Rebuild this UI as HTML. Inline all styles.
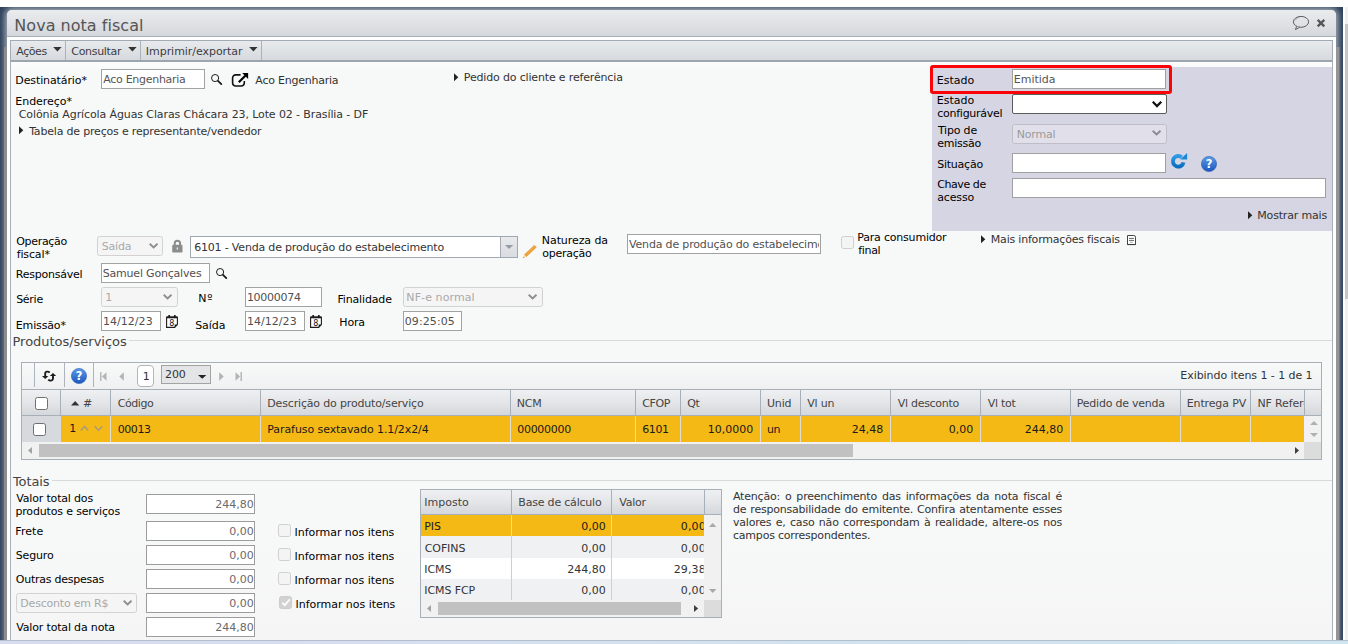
<!DOCTYPE html>
<html lang="pt-BR">
<head>
<meta charset="utf-8">
<title>Nova nota fiscal</title>
<style>
html,body{margin:0;padding:0;background:#fff;}
body{width:1348px;height:644px;overflow:hidden;font:11px/13px "DejaVu Sans","Liberation Sans",sans-serif;color:#333;}
#root{position:relative;width:1348px;height:644px;overflow:hidden;}
#root div,#root svg{position:absolute;box-sizing:border-box;}
.t{white-space:pre;line-height:13px;font-size:11px;}
.inp{background:#fff;border:1px solid #a2a2a2;}
.sel{background:#f5f5f5;border:1px solid #d2d2d2;border-radius:2.500px;}
.cb{background:#f4f4f4;border:1px solid #cfcfcf;border-radius:2.500px;}
.hd{background:linear-gradient(#eff0f2,#e2e4e7 55%,#d4d7db);}
.vl{background:#a7afb8;width:1px;}
.cl{background:#f3d785;width:1px;}

</style>
</head>
<body>
<div id="root">
<div style="left:0;top:7px;width:1343px;height:633px;background:#2e415a;overflow:hidden;"><div style="left:7px;top:3px;width:1329px;height:640px;border-radius:5px;box-shadow:0 0 6px 2px rgba(186,193,202,0.900);"></div><div style="left:4px;top:40px;width:3px;height:593px;background:#8c8c8c;"></div><div style="left:1336px;top:40px;width:3.500px;height:593px;background:#949494;border-right:1px solid #7a7a7a;"></div></div>
<div style="left:1343px;top:0px;width:5px;height:644px;background:#fff;"></div>
<div style="left:1345px;top:7px;width:3px;height:633px;background:#f1f1f1;"></div>
<div style="left:1345px;top:24px;width:3px;height:275px;background:#c6c6c6;"></div>
<div style="left:7px;top:10px;width:1329px;height:634px;background:#fff;border-radius:5px 5px 0 0;"></div>
<div style="left:7px;top:10px;width:1329px;height:27px;background:linear-gradient(#eaebed,#dfe1e4 55%,#d4d7db);border-radius:5px 5px 0 0;border-bottom:1px solid #a9b0b8;"></div>
<div class="t" style="top:17px;line-height:18px;font-size:16px;color:#555;letter-spacing:0.027px;left:14.33px;">Nova nota fiscal</div>
<div style="left:10px;top:40px;width:1323px;height:22px;background:linear-gradient(#e8eaec,#dfe2e5 50%,#d6d9dd);border:1px solid #a2abb4;border-bottom:2px solid #9ca6af;"></div>
<div style="left:65px;top:41px;width:1px;height:19px;background:#a9b1b9;"></div>
<div style="left:140px;top:41px;width:1px;height:19px;background:#a9b1b9;"></div>
<div style="left:261px;top:41px;width:1px;height:19px;background:#a9b1b9;"></div>
<div class="t" style="top:45px;color:#3c3c44;letter-spacing:-0.447px;left:16.31px;">Ações</div>
<div class="t" style="top:45px;color:#3c3c44;letter-spacing:-0.300px;left:71.28px;">Consultar</div>
<div class="t" style="top:45px;color:#3c3c44;letter-spacing:-0.040px;left:145.82px;">Imprimir/exportar</div>
<svg style="left:52.5px;top:47.300px" width="9" height="5" viewBox="0 0 9 5"><path d="M0.200 0h8.400l-4.200 4.400z" fill="#333"/></svg>
<svg style="left:128px;top:47.300px" width="9" height="5" viewBox="0 0 9 5"><path d="M0.200 0h8.400l-4.200 4.400z" fill="#333"/></svg>
<svg style="left:249px;top:47.300px" width="9" height="5" viewBox="0 0 9 5"><path d="M0.200 0h8.400l-4.200 4.400z" fill="#333"/></svg>
<div style="left:10px;top:62px;width:1323px;height:578px;background:linear-gradient(#fdfdfd,#f7f9f8 8px,#f7f9f8 470px,#f5f5f5 570px);border-left:1px solid #a9b1b9;border-right:1px solid #a9b1b9;"></div>
<div style="left:0px;top:640px;width:1348px;height:4px;background:linear-gradient(90deg,#d9dbee,#d3e2ef 60%,#cfe7f0);border-top:1px solid #b3bfcd;"></div>
<svg style="left:1292px;top:15px" width="19" height="17" viewBox="0 0 19 17"><ellipse cx="9" cy="6.850" rx="7.600" ry="5.450" fill="none" stroke="#5e5e5e" stroke-width="1"/><path d="M4.600 11.200L3.500 14.600L7.600 12.200" fill="#dfe1e4" stroke="#5e5e5e" stroke-width="1" stroke-linejoin="round"/><path d="M2.900 5.600C3.700 3.900 5.500 2.900 7.600 2.600" fill="none" stroke="#8a8a8a" stroke-width="0.700" stroke-dasharray="1.200 0.600"/></svg>
<svg style="left:1316px;top:18px" width="10" height="10" viewBox="0 0 10 10"><path d="M1.700 1.900l6.600 6.400M8.300 1.900l-6.600 6.400" stroke="#555" stroke-width="2.300" stroke-linecap="butt"/></svg>
<div class="t" style="top:74px;color:#000;letter-spacing:-0.110px;left:15.32px;">Destinatário*</div>
<div class="inp" style="left:101px;top:69px;width:104px;height:20px;"></div>
<div class="t" style="top:72.5px;color:#555;letter-spacing:-0.284px;left:103.21px;">Aco Engenharia</div>
<svg style="left:211px;top:73.9px" width="13" height="12" viewBox="0 0 13 12"><circle cx="4.100" cy="4.050" r="3.550" fill="none" stroke="#1a1a1a" stroke-width="1"/><path d="M7 6.900l3.300 3.200" stroke="#1a1a1a" stroke-width="1.800" stroke-linecap="round"/></svg>
<svg style="left:231px;top:72px" width="19" height="16" viewBox="0 0 19 16"><path d="M9.600 2.900H4.600a3 3 0 0 0-3 3V11a3 3 0 0 0 3 3h5.700a3 3 0 0 0 3-3V9.100" fill="none" stroke="#111" stroke-width="1.600"/><path d="M7.800 10.200L15 3" stroke="#000" stroke-width="2.200"/><path d="M11.200 1.100h5.900v6z" fill="#000"/></svg>
<div class="t" style="top:74px;color:#333;letter-spacing:-0.230px;left:255.31px;">Aco Engenharia</div>
<div class="t" style="top:95px;color:#000;letter-spacing:-0.049px;left:15.32px;">Endereço*</div>
<div class="t" style="top:107.5px;color:#333;letter-spacing:-0.108px;left:18.78px;">Colônia Agrícola Águas Claras Chácara 23, Lote 02 - Brasília - DF</div>
<svg style="left:19px;top:126px" width="5" height="9" viewBox="0 0 5 9"><path d="M0 0.300l4.300 4L0 8.300z" fill="#222"/></svg>
<div class="t" style="top:124.5px;color:#333;letter-spacing:-0.184px;left:29.13px;">Tabela de preços e representante/vendedor</div>
<svg style="left:454px;top:72.5px" width="5" height="9" viewBox="0 0 5 9"><path d="M0 0.300l4.300 4L0 8.300z" fill="#222"/></svg>
<div class="t" style="top:71px;color:#333;letter-spacing:-0.162px;left:463.82px;">Pedido do cliente e referência</div>
<div style="left:932px;top:67px;width:400px;height:164px;background:#d6d5e3;"></div>
<div class="t" style="top:74px;color:#000;letter-spacing:-0.014px;left:936.82px;">Estado</div>
<div class="inp" style="left:1012px;top:69px;width:154px;height:20px;border-color:#a0a0a0;"></div>
<div class="t" style="top:72.5px;color:#555;letter-spacing:-0.008px;left:1013.82px;">Emitida</div>
<div class="t" style="top:94px;color:#000;letter-spacing:-0.014px;left:936.82px;">Estado</div>
<div class="t" style="top:106.5px;color:#000;letter-spacing:-0.263px;left:937.29px;">configurável</div>
<div style="left:1012px;top:94px;width:155px;height:20px;background:#fff;border:1px solid #5c5c5c;border-radius:2px;"></div>
<svg style="left:1151.5px;top:101px" width="11" height="7.5" viewBox="0 0 11 7.5"><path d="M0.700 0.700L5.0 5.1L9.3 0.700" fill="none" stroke="#111" stroke-width="2.2" stroke-linecap="butt" stroke-linejoin="miter"/></svg>
<div style="left:930px;top:65px;width:242px;height:29px;border:3px solid #fa0409;border-radius:3px;"></div>
<div class="t" style="top:123.5px;color:#000;letter-spacing:-0.192px;left:937.93px;">Tipo de</div>
<div class="t" style="top:137px;color:#000;letter-spacing:-0.263px;left:937.29px;">emissão</div>
<div class="sel" style="left:1012px;top:124px;width:155px;height:20px;background:#e1e0ea;border-color:#bfbec8;"></div>
<div class="t" style="top:127.5px;color:#9a9a9a;letter-spacing:-0.200px;left:1016.82px;">Normal</div>
<svg style="left:1151.5px;top:130.4px" width="10.2" height="6.8" viewBox="0 0 10.2 6.8"><path d="M0.700 0.700L4.6 4.4L8.5 0.700" fill="none" stroke="#8a8a92" stroke-width="1.9" stroke-linecap="butt" stroke-linejoin="miter"/></svg>
<div class="t" style="top:157.5px;color:#000;letter-spacing:-0.224px;left:937.17px;">Situação</div>
<div class="inp" style="left:1012px;top:153px;width:154px;height:20px;border-color:#a0a0a0;"></div>
<svg style="left:1170px;top:152px" width="18" height="18" viewBox="0 0 18 18"><defs><linearGradient id="rg" x1="0" y1="0" x2="0" y2="1"><stop offset="0" stop-color="#2f9be6"/><stop offset="1" stop-color="#0a6fc0"/></linearGradient></defs><path d="M13.500 10.300A5.350 5.350 0 1 1 11.700 5.200" fill="none" stroke="url(#rg)" stroke-width="3.900"/><path d="M10.300 7.500L17.100 0.900v6.600z" fill="#1787d8"/></svg>
<svg style="left:1201px;top:156px" width="16" height="16" viewBox="0 0 16 16"><defs><linearGradient id="hg1201" x1="0" y1="0" x2="0" y2="1"><stop offset="0" stop-color="#5a9be8"/><stop offset="1" stop-color="#1c57c0"/></linearGradient></defs><circle cx="8" cy="8" r="7.600" fill="url(#hg1201)" stroke="#2a5db0" stroke-width="0.600"/><text x="8" y="12.300" font-size="11.500" font-weight="bold" text-anchor="middle" fill="#fff" font-family="DejaVu Sans, Liberation Sans, sans-serif">?</text></svg>
<div class="t" style="top:178px;color:#000;letter-spacing:-0.431px;left:937.28px;">Chave de</div>
<div class="t" style="top:190.5px;color:#000;letter-spacing:-0.158px;left:937.24px;">acesso</div>
<div class="inp" style="left:1012px;top:178px;width:314px;height:20px;border-color:#a0a0a0;"></div>
<svg style="left:1248px;top:210.5px" width="5" height="9" viewBox="0 0 5 9"><path d="M0 0.300l4.300 4L0 8.300z" fill="#222"/></svg>
<div class="t" style="top:208.5px;color:#333;letter-spacing:-0.180px;left:1257.32px;">Mostrar mais</div>
<div class="t" style="top:234.5px;color:#000;letter-spacing:-0.326px;left:16.28px;">Operação</div>
<div class="t" style="top:247.5px;color:#000;letter-spacing:-0.123px;left:16.65px;">fiscal*</div>
<div class="sel" style="left:97px;top:236px;width:66px;height:20px;"></div>
<div class="t" style="top:240px;color:#a9a9a9;letter-spacing:-0.148px;left:101.67px;">Saída</div>
<svg style="left:149px;top:243.4px" width="10.2" height="6.8" viewBox="0 0 10.2 6.8"><path d="M0.700 0.700L4.6 4.4L8.5 0.700" fill="none" stroke="#8e8e8e" stroke-width="1.9" stroke-linecap="butt" stroke-linejoin="miter"/></svg>
<svg style="left:171px;top:239px" width="13" height="15" viewBox="0 0 13 15"><path d="M3.700 6.500V4.400a2.700 2.700 0 0 1 5.400 0v2.100" fill="none" stroke="#8c8c8c" stroke-width="2"/><rect x="1.200" y="5.700" width="10.300" height="7.900" rx="1.200" fill="#8c8c8c"/><path d="M6.300 8.600v2" stroke="#f7f8f8" stroke-width="1.200"/></svg>
<div style="left:190px;top:236px;width:328px;height:22px;background:#fff;border:1px solid #a0a8b1;"></div>
<div style="left:500px;top:237px;width:17px;height:20px;background:linear-gradient(#e8eaec,#d9dce0);border-left:1px solid #a4acb5;"></div>
<svg style="left:504.800px;top:245px" width="9" height="4" viewBox="0 0 9 4"><path d="M0 0h8.200L4.100 3.900z" fill="#959ca4"/></svg>
<div class="t" style="top:240.5px;color:#333;letter-spacing:-0.182px;left:194.13px;">6101 - Venda de produção do estabelecimento</div>
<svg style="left:522px;top:244px" width="15" height="15" viewBox="0 0 15 15"><path d="M12.300 1.400l1.900 1.900L4.300 12.700 2.400 10.800z" fill="#f2a33a" stroke="#e0902a" stroke-width="0.700"/><path d="M2.400 10.800l1.900 1.900-3.300 1.100z" fill="#f3ddb0"/><path d="M1.700 12.700l0.600 0.600-1.400 0.500z" fill="#222"/></svg>
<div class="t" style="top:233.5px;color:#000;letter-spacing:-0.077px;left:541.82px;">Natureza da</div>
<div class="t" style="top:246.5px;color:#000;letter-spacing:-0.265px;left:542.29px;">operação</div>
<div class="inp" style="left:627px;top:234px;width:194px;height:20px;"></div>
<div class="t" style="left:629px;top:238px;width:190px;overflow:hidden;color:#505050;letter-spacing:-0.170px;">Venda de produção do estabelecimento</div>
<div class="cb" style="left:841px;top:236px;width:13px;height:13px;"></div>
<div class="t" style="top:231px;color:#000;letter-spacing:-0.202px;left:857.32px;">Para consumidor</div>
<div class="t" style="top:244px;color:#000;letter-spacing:-0.305px;left:858.15px;">final</div>
<svg style="left:981px;top:234.5px" width="5" height="9" viewBox="0 0 5 9"><path d="M0 0.300l4.300 4L0 8.300z" fill="#222"/></svg>
<div class="t" style="top:233px;color:#333;letter-spacing:-0.202px;left:990.82px;">Mais informações fiscais</div>
<svg style="left:1127px;top:235px" width="10" height="11" viewBox="0 0 10 11"><path d="M0.500 0.500H6.800a1.700 1.700 0 0 1 1.700 1.700V9.500H0.500z" fill="#fff" stroke="#444" stroke-width="1"/><path d="M2 3.400h5M2 5.400h5" stroke="#555" stroke-width="0.900"/><path d="M2.800 7.300h3" stroke="#999" stroke-width="0.800"/><path d="M0.300 9.600h8.400" stroke="#333" stroke-width="0.800"/></svg>
<div class="t" style="top:267.5px;color:#000;letter-spacing:-0.233px;left:15.82px;">Responsável</div>
<div class="inp" style="left:101px;top:263px;width:109px;height:20px;"></div>
<div class="t" style="top:266.5px;color:#505050;letter-spacing:-0.190px;left:102.67px;">Samuel Gonçalves</div>
<svg style="left:216px;top:268px" width="13" height="12" viewBox="0 0 13 12"><circle cx="4.100" cy="4.050" r="3.550" fill="none" stroke="#1a1a1a" stroke-width="1"/><path d="M7 6.900l3.300 3.200" stroke="#1a1a1a" stroke-width="1.800" stroke-linecap="round"/></svg>
<div class="t" style="top:292.5px;color:#000;letter-spacing:-0.275px;left:16.17px;">Série</div>
<div class="sel" style="left:101px;top:287px;width:77px;height:20px;"></div>
<div class="t" style="top:291px;color:#a9a9a9;letter-spacing:-0.105px;left:105.19px;">1</div>
<svg style="left:163.4px;top:294.4px" width="10.2" height="6.8" viewBox="0 0 10.2 6.8"><path d="M0.700 0.700L4.6 4.4L8.5 0.700" fill="none" stroke="#8e8e8e" stroke-width="1.9" stroke-linecap="butt" stroke-linejoin="miter"/></svg>
<div class="t" style="top:292px;color:#000;letter-spacing:0.779px;left:198.22px;">Nº</div>
<div class="inp" style="left:245px;top:287px;width:77px;height:20px;"></div>
<div class="t" style="top:291px;color:#505050;letter-spacing:-0.282px;left:246.89px;">10000074</div>
<div class="t" style="top:293px;color:#000;letter-spacing:-0.147px;left:337.42px;">Finalidade</div>
<div class="sel" style="left:403px;top:287px;width:140px;height:20px;"></div>
<div class="t" style="top:291px;color:#a9a9a9;letter-spacing:0.097px;left:406.32px;">NF-e normal</div>
<svg style="left:528px;top:294.4px" width="10.2" height="6.8" viewBox="0 0 10.2 6.8"><path d="M0.700 0.700L4.6 4.4L8.5 0.700" fill="none" stroke="#8e8e8e" stroke-width="1.9" stroke-linecap="butt" stroke-linejoin="miter"/></svg>
<div class="t" style="top:318.5px;color:#000;letter-spacing:-0.150px;left:15.82px;">Emissão*</div>
<div class="inp" style="left:101px;top:311px;width:60px;height:20px;"></div>
<div class="t" style="top:315px;color:#505050;letter-spacing:0.055px;left:102.89px;">14/12/23</div>
<svg style="left:166.4px;top:315px" width="12" height="13" viewBox="0 0 12 13"><path d="M0.600 2.400H11.400V9.600L8.700 12.400H0.600z" fill="#fff" stroke="#1c1c1c" stroke-width="1.100"/><path d="M0.600 2.300H11.400" stroke="#1c1c1c" stroke-width="1.900"/><path d="M3.200 0.300v2M8.800 0.300v2" stroke="#1c1c1c" stroke-width="1.700" stroke-linecap="round"/><path d="M8.700 12.400V9.600H11.400z" fill="#1c1c1c"/><text x="5.700" y="10.700" font-size="8" text-anchor="middle" fill="#111" font-family="DejaVu Sans, Liberation Sans, sans-serif">8</text></svg>
<div class="t" style="top:318.5px;color:#000;letter-spacing:-0.023px;left:195.17px;">Saída</div>
<div class="inp" style="left:245px;top:311px;width:60px;height:20px;"></div>
<div class="t" style="top:315px;color:#505050;letter-spacing:0.055px;left:246.89px;">14/12/23</div>
<svg style="left:310px;top:315px" width="12" height="13" viewBox="0 0 12 13"><path d="M0.600 2.400H11.400V9.600L8.700 12.400H0.600z" fill="#fff" stroke="#1c1c1c" stroke-width="1.100"/><path d="M0.600 2.300H11.400" stroke="#1c1c1c" stroke-width="1.900"/><path d="M3.200 0.300v2M8.800 0.300v2" stroke="#1c1c1c" stroke-width="1.700" stroke-linecap="round"/><path d="M8.700 12.400V9.600H11.400z" fill="#1c1c1c"/><text x="5.700" y="10.700" font-size="8" text-anchor="middle" fill="#111" font-family="DejaVu Sans, Liberation Sans, sans-serif">8</text></svg>
<div class="t" style="top:316px;color:#000;letter-spacing:-0.162px;left:339.32px;">Hora</div>
<div class="inp" style="left:403px;top:311px;width:59px;height:20px;"></div>
<div class="t" style="top:315px;color:#505050;letter-spacing:0.111px;left:404.67px;">09:25:05</div>
<div style="left:11px;top:340px;width:1321px;height:1px;background:#d8d9da;"></div>
<div style="left:11px;top:333px;width:118px;height:16px;background:#f7f9f8;"></div>
<div class="t" style="top:334px;line-height:15px;font-size:13px;color:#444;letter-spacing:-0.026px;left:12.52px;">Produtos/serviços</div>
<div style="left:21px;top:362px;width:1301px;height:98px;background:#f5f6f6;border:1px solid #a7afb8;"></div>
<div style="left:22px;top:363px;width:1299px;height:26px;background:linear-gradient(#f8f9f9,#eff0f1);"></div>
<div style="left:34px;top:363px;width:1px;height:24px;background:#adb4bd;"></div>
<div style="left:64px;top:363px;width:1px;height:24px;background:#adb4bd;"></div>
<div style="left:93px;top:363px;width:1px;height:24px;background:#adb4bd;"></div>
<svg style="left:41px;top:370px" width="16" height="12" viewBox="0 0 16 12"><path d="M8.700 2.600C7.400 1.200 4.200 1.100 4.200 3.600V6.500" fill="none" stroke="#1c1c1c" stroke-width="1.900"/><path d="M1 5.900h6.400L4.200 9z" fill="#1c1c1c"/><path d="M7.300 9.700C8.600 11.100 12 11 12 8.600V5.500" fill="none" stroke="#1c1c1c" stroke-width="1.900"/><path d="M8.800 6h6.400L12 3.100z" fill="#1c1c1c"/></svg>
<svg style="left:71px;top:368px" width="16" height="16" viewBox="0 0 16 16"><defs><linearGradient id="hg71" x1="0" y1="0" x2="0" y2="1"><stop offset="0" stop-color="#5a9be8"/><stop offset="1" stop-color="#1c57c0"/></linearGradient></defs><circle cx="8" cy="8" r="7.600" fill="url(#hg71)" stroke="#2a5db0" stroke-width="0.600"/><text x="8" y="12.300" font-size="11.500" font-weight="bold" text-anchor="middle" fill="#fff" font-family="DejaVu Sans, Liberation Sans, sans-serif">?</text></svg>
<svg style="left:100px;top:372px" width="7" height="9" viewBox="0 0 7 9"><path d="M0.800 0v9" stroke="#b3b3b3" stroke-width="1.400"/><path d="M6.500 0.300v8.400L2 4.500z" fill="#b3b3b3"/></svg>
<svg style="left:119px;top:372px" width="5" height="9" viewBox="0 0 5 9"><path d="M4.800 0.300v8.400L0.300 4.500z" fill="#b3b3b3"/></svg>
<div style="left:137px;top:365px;width:17px;height:22px;background:#fff;border:1px solid #b4b4b4;border-radius:4px;"></div>
<div class="t" style="top:370px;color:#333;letter-spacing:-0.105px;left:142.69px;">1</div>
<div style="left:161px;top:365px;width:50px;height:19px;background:#e4e5e7;border:1px solid #a3a3a3;"></div>
<div class="t" style="top:367.5px;color:#333;letter-spacing:-0.132px;left:165.09px;">200</div>
<svg style="left:197.800px;top:374.500px" width="9" height="4" viewBox="0 0 9 4"><path d="M0 0h8.400L4.200 3.700z" fill="#222"/></svg>
<svg style="left:218.500px;top:372px" width="5" height="9" viewBox="0 0 5 9"><path d="M0.200 0.300v8.400L4.700 4.500z" fill="#b3b3b3"/></svg>
<svg style="left:235px;top:372px" width="7" height="9" viewBox="0 0 7 9"><path d="M6.200 0v9" stroke="#b3b3b3" stroke-width="1.400"/><path d="M0.500 0.300v8.400L5 4.500z" fill="#b3b3b3"/></svg>
<div class="t" style="top:369px;color:#333;letter-spacing:-0.062px;left:1180.32px;">Exibindo itens 1 - 1 de 1</div>
<div class="hd" style="left:22px;top:389px;width:1299px;height:27px;border-top:1px solid #a7afb8;border-bottom:1px solid #a7afb8;"></div>
<div style="left:60px;top:390px;width:1px;height:25px;background:#a7afb8;"></div>
<div style="left:110px;top:390px;width:1px;height:25px;background:#a7afb8;"></div>
<div style="left:260px;top:390px;width:1px;height:25px;background:#a7afb8;"></div>
<div style="left:510px;top:390px;width:1px;height:25px;background:#a7afb8;"></div>
<div style="left:635px;top:390px;width:1px;height:25px;background:#a7afb8;"></div>
<div style="left:680px;top:390px;width:1px;height:25px;background:#a7afb8;"></div>
<div style="left:760px;top:390px;width:1px;height:25px;background:#a7afb8;"></div>
<div style="left:800px;top:390px;width:1px;height:25px;background:#a7afb8;"></div>
<div style="left:890px;top:390px;width:1px;height:25px;background:#a7afb8;"></div>
<div style="left:980px;top:390px;width:1px;height:25px;background:#a7afb8;"></div>
<div style="left:1070px;top:390px;width:1px;height:25px;background:#a7afb8;"></div>
<div style="left:1180px;top:390px;width:1px;height:25px;background:#a7afb8;"></div>
<div style="left:1250px;top:390px;width:1px;height:25px;background:#a7afb8;"></div>
<div style="left:1304px;top:390px;width:1px;height:25px;background:#a7afb8;"></div>
<div style="left:35px;top:397px;width:13px;height:13px;background:#fff;border:1px solid #6f6f6f;border-radius:2.500px;"></div>
<svg style="left:70.900px;top:401.300px" width="9" height="5" viewBox="0 0 9 5"><path d="M0 4.400h8.300L4.150 0z" fill="#333"/></svg>
<div class="t" style="top:397px;color:#444;letter-spacing:-0.327px;left:83.05px;">#</div>
<div class="t" style="top:397px;color:#444;letter-spacing:-0.451px;left:117.78px;">Código</div>
<div class="t" style="top:397px;color:#444;letter-spacing:-0.167px;left:267.32px;">Descrição do produto/serviço</div>
<div class="t" style="top:397px;color:#444;letter-spacing:-0.276px;left:516.82px;">NCM</div>
<div class="t" style="top:397px;color:#444;letter-spacing:-0.373px;left:642.28px;">CFOP</div>
<div class="t" style="top:397px;color:#444;letter-spacing:-0.404px;left:687.28px;">Qt</div>
<div class="t" style="top:397px;color:#444;letter-spacing:-0.136px;left:766.94px;">Unid</div>
<div class="t" style="top:397px;color:#444;letter-spacing:-0.203px;left:807.31px;">Vl un</div>
<div class="t" style="top:397px;color:#444;letter-spacing:-0.297px;left:897.81px;">Vl desconto</div>
<div class="t" style="top:397px;color:#444;letter-spacing:-0.278px;left:987.81px;">Vl tot</div>
<div class="t" style="top:397px;color:#444;letter-spacing:-0.229px;left:1076.82px;">Pedido de venda</div>
<div class="t" style="top:397px;color:#444;letter-spacing:-0.145px;left:1186.82px;">Entrega PV</div>
<div class="t" style="left:1257.500px;top:397px;width:46.500px;overflow:hidden;color:#444;letter-spacing:-0.150px;">NF Referência</div>
<div style="left:22px;top:416px;width:39px;height:26px;background:#d6d9dd;"></div>
<div style="left:61px;top:416px;width:1243px;height:26px;background:#f5b916;"></div>
<div style="left:110px;top:416px;width:1px;height:26px;background:#e2ded2;"></div>
<div style="left:260px;top:416px;width:1px;height:26px;background:#e2ded2;"></div>
<div style="left:510px;top:416px;width:1px;height:26px;background:#e2ded2;"></div>
<div style="left:635px;top:416px;width:1px;height:26px;background:#e2ded2;"></div>
<div style="left:680px;top:416px;width:1px;height:26px;background:#e2ded2;"></div>
<div style="left:760px;top:416px;width:1px;height:26px;background:#e2ded2;"></div>
<div style="left:800px;top:416px;width:1px;height:26px;background:#e2ded2;"></div>
<div style="left:890px;top:416px;width:1px;height:26px;background:#e2ded2;"></div>
<div style="left:980px;top:416px;width:1px;height:26px;background:#e2ded2;"></div>
<div style="left:1070px;top:416px;width:1px;height:26px;background:#e2ded2;"></div>
<div style="left:1180px;top:416px;width:1px;height:26px;background:#e2ded2;"></div>
<div style="left:1250px;top:416px;width:1px;height:26px;background:#e2ded2;"></div>
<div style="left:33px;top:422.500px;width:13px;height:13px;background:#fff;border:1px solid #6f6f6f;border-radius:2.500px;"></div>
<div class="t" style="top:422px;color:#1a1a1a;letter-spacing:-0.105px;left:69.29px;">1</div>
<svg style="left:79.500px;top:424.900px" width="9" height="7" viewBox="0 0 9 7"><path d="M0.700 5.500L4.500 1.500l3.800 4" fill="none" stroke="#a39a84" stroke-width="1.350"/></svg>
<svg style="left:93.500px;top:425.100px" width="9" height="7" viewBox="0 0 9 7"><path d="M0.700 1.200L4.500 5.200l3.800-4" fill="none" stroke="#a39a84" stroke-width="1.350"/></svg>
<div class="t" style="top:422.5px;color:#1a1a1a;letter-spacing:-0.424px;left:117.67px;">00013</div>
<div class="t" style="top:422.5px;color:#1a1a1a;letter-spacing:-0.085px;left:267.32px;">Parafuso sextavado 1.1/2x2/4</div>
<div class="t" style="top:422.5px;color:#1a1a1a;letter-spacing:-0.263px;left:517.17px;">00000000</div>
<div class="t" style="top:422.5px;color:#1a1a1a;letter-spacing:-0.339px;left:642.13px;">6101</div>
<div class="t" style="top:422.5px;color:#1a1a1a;letter-spacing:0.000px;right:594.67px;">10,0000</div>
<div class="t" style="top:422.5px;color:#1a1a1a;letter-spacing:-0.384px;left:766.97px;">un</div>
<div class="t" style="top:422.5px;color:#1a1a1a;letter-spacing:0.000px;right:464.65px;">24,48</div>
<div class="t" style="top:422.5px;color:#1a1a1a;letter-spacing:0.000px;right:374.67px;">0,00</div>
<div class="t" style="top:422.5px;color:#1a1a1a;letter-spacing:0.000px;right:284.67px;">244,80</div>
<div style="left:1304px;top:416px;width:17px;height:26px;background:#f1f1f1;"></div>
<svg style="left:1309.500px;top:421px" width="8" height="4" viewBox="0 0 8 4"><path d="M0 4h8L4 0z" fill="#b0b0b0"/></svg>
<svg style="left:1309.500px;top:433px" width="8" height="4" viewBox="0 0 8 4"><path d="M0 0h8L4 4z" fill="#b0b0b0"/></svg>
<div style="left:22px;top:442px;width:1282px;height:17px;background:#f1f1f1;"></div>
<div style="left:39px;top:444px;width:814px;height:13px;background:#c1c1c1;"></div>
<svg style="left:28px;top:447px" width="4" height="7" viewBox="0 0 4 7"><path d="M4 0v7L0 3.500z" fill="#a3a3a3"/></svg>
<svg style="left:1295px;top:447px" width="4" height="7" viewBox="0 0 4 7"><path d="M0 0v7L4 3.500z" fill="#404040"/></svg>
<div style="left:1304px;top:442px;width:17px;height:17px;background:#dcdcdc;"></div>
<div style="left:11px;top:480px;width:1321px;height:1px;background:#d8d9da;"></div>
<div style="left:11px;top:473px;width:41px;height:15px;background:#f7f9f8;"></div>
<div class="t" style="top:474px;line-height:15px;font-size:13px;color:#444;letter-spacing:-0.089px;left:12.94px;">Totais</div>
<div class="t" style="top:492px;color:#000;letter-spacing:-0.178px;left:16.31px;">Valor total dos</div>
<div class="t" style="top:504.5px;color:#000;letter-spacing:-0.158px;left:15.40px;">produtos e serviços</div>
<div class="t" style="top:525px;color:#000;letter-spacing:0.052px;left:15.32px;">Frete</div>
<div class="t" style="top:549px;color:#000;letter-spacing:-0.138px;left:15.67px;">Seguro</div>
<div class="t" style="top:573px;color:#000;letter-spacing:-0.251px;left:15.78px;">Outras despesas</div>
<div class="t" style="top:620.5px;color:#000;letter-spacing:-0.170px;left:16.31px;">Valor total da nota</div>
<div class="inp" style="left:146px;top:494px;width:109px;height:20px;border-color:#9c9c9c;"></div>
<div class="t" style="top:498px;color:#6a6a6a;letter-spacing:0.000px;right:1094.17px;">244,80</div>
<div class="inp" style="left:146px;top:521px;width:109px;height:20px;border-color:#9c9c9c;"></div>
<div class="t" style="top:525px;color:#6a6a6a;letter-spacing:0.000px;right:1094.17px;">0,00</div>
<div class="inp" style="left:146px;top:545px;width:109px;height:20px;border-color:#9c9c9c;"></div>
<div class="t" style="top:549px;color:#6a6a6a;letter-spacing:0.000px;right:1094.17px;">0,00</div>
<div class="inp" style="left:146px;top:569px;width:109px;height:20px;border-color:#9c9c9c;"></div>
<div class="t" style="top:573px;color:#6a6a6a;letter-spacing:0.000px;right:1094.17px;">0,00</div>
<div class="inp" style="left:146px;top:593px;width:109px;height:20px;border-color:#9c9c9c;"></div>
<div class="t" style="top:597px;color:#6a6a6a;letter-spacing:0.000px;right:1094.17px;">0,00</div>
<div class="inp" style="left:146px;top:617px;width:109px;height:20px;border-color:#9c9c9c;"></div>
<div class="t" style="top:621px;color:#6a6a6a;letter-spacing:0.000px;right:1094.17px;">244,80</div>
<div class="sel" style="left:16px;top:593px;width:120.5px;height:20px;"></div>
<div class="t" style="top:597px;color:#a8a8a8;letter-spacing:-0.208px;left:20.32px;">Desconto em R$</div>
<svg style="left:122.8px;top:600.4px" width="10.2" height="6.8" viewBox="0 0 10.2 6.8"><path d="M0.700 0.700L4.6 4.4L8.5 0.700" fill="none" stroke="#8e8e8e" stroke-width="1.9" stroke-linecap="butt" stroke-linejoin="miter"/></svg>
<div class="cb" style="left:278px;top:524px;width:13px;height:13px;"></div>
<div class="cb" style="left:278px;top:548px;width:13px;height:13px;"></div>
<div class="cb" style="left:278px;top:572px;width:13px;height:13px;"></div>
<div style="left:279px;top:596px;width:13px;height:13px;background:#d2d2d2;border:1px solid #cdcdcd;border-radius:2.500px;"></div>
<svg style="left:280.500px;top:598px" width="10" height="9" viewBox="0 0 10 9"><path d="M1.300 4.600l2.500 2.600 4.900-5.800" fill="none" stroke="#fff" stroke-width="1.700"/></svg>
<div class="t" style="top:526px;color:#000;letter-spacing:-0.041px;left:294.62px;">Informar nos itens</div>
<div class="t" style="top:550px;color:#000;letter-spacing:-0.041px;left:294.62px;">Informar nos itens</div>
<div class="t" style="top:574px;color:#000;letter-spacing:-0.041px;left:294.62px;">Informar nos itens</div>
<div class="t" style="top:598px;color:#000;letter-spacing:-0.041px;left:295.62px;">Informar nos itens</div>
<div style="left:420px;top:489px;width:302px;height:129px;background:#fff;border:1px solid #a7afb8;"></div>
<div class="hd" style="left:421px;top:490px;width:300px;height:25px;border-bottom:1px solid #a7afb8;"></div>
<div style="left:511px;top:490px;width:1px;height:24px;background:#a7afb8;"></div>
<div style="left:611px;top:490px;width:1px;height:24px;background:#a7afb8;"></div>
<div style="left:704px;top:490px;width:1px;height:24px;background:#a7afb8;"></div>
<div class="t" style="top:496px;color:#444;letter-spacing:-0.012px;left:424.32px;">Imposto</div>
<div class="t" style="top:496px;color:#444;letter-spacing:-0.200px;left:518.32px;">Base de cálculo</div>
<div class="t" style="top:496px;color:#444;letter-spacing:-0.237px;left:619.31px;">Valor</div>
<div style="left:421px;top:515px;width:283px;height:85px;overflow:hidden;">
<div style="left:0;top:0px;width:283px;height:21px;background:#f5b916;"></div>
<div style="left:0;top:21px;width:283px;height:22px;background:#f0f1f3;"></div>
<div style="left:0;top:43px;width:283px;height:21px;background:#fff;"></div>
<div style="left:0;top:64px;width:283px;height:21px;background:#f0f1f3;"></div>
<div style="left:90px;top:0;width:1px;height:85px;background:#cdcfd3;"></div>
<div style="left:190px;top:0;width:1px;height:85px;background:#cdcfd3;"></div>
<div style="left:90px;top:0;width:1px;height:21px;background:#e6dfc8;"></div>
<div style="left:190px;top:0;width:1px;height:21px;background:#e6dfc8;"></div>
</div>
<div class="t" style="top:520px;color:#1a1a1a;letter-spacing:-0.084px;left:424.32px;">PIS</div>
<div class="t" style="top:520px;color:#1a1a1a;letter-spacing:0.000px;right:742.17px;">0,00</div>
<div class="t" style="top:520px;color:#1a1a1a;letter-spacing:0.123px;right:642.25px;clip-path:inset(0 2.100px 0 0);">0,00</div>
<div class="t" style="top:541.5px;color:#333;letter-spacing:-0.103px;left:424.78px;">COFINS</div>
<div class="t" style="top:541.5px;color:#333;letter-spacing:0.000px;right:742.17px;">0,00</div>
<div class="t" style="top:541.5px;color:#333;letter-spacing:0.123px;right:642.25px;clip-path:inset(0 2.100px 0 0);">0,00</div>
<div class="t" style="top:562.5px;color:#333;letter-spacing:-0.103px;left:424.32px;">ICMS</div>
<div class="t" style="top:562.5px;color:#333;letter-spacing:0.000px;right:742.17px;">244,80</div>
<div class="t" style="top:562.5px;color:#333;letter-spacing:0.126px;right:642.22px;clip-path:inset(0 2.100px 0 0);">29,38</div>
<div class="t" style="top:584px;color:#333;letter-spacing:-0.097px;left:424.32px;">ICMS FCP</div>
<div class="t" style="top:584px;color:#333;letter-spacing:0.000px;right:742.17px;">0,00</div>
<div class="t" style="top:584px;color:#333;letter-spacing:0.123px;right:642.25px;clip-path:inset(0 2.100px 0 0);">0,00</div>
<div style="left:704px;top:515px;width:17px;height:85px;background:#f1f1f1;"></div>
<svg style="left:709px;top:522.500px" width="8" height="4" viewBox="0 0 8 4"><path d="M0 4h7.400L3.700 0z" fill="#a8a8a8"/></svg>
<svg style="left:709px;top:589px" width="8" height="4" viewBox="0 0 8 4"><path d="M0 0h7.400L3.700 4z" fill="#a8a8a8"/></svg>
<div style="left:421px;top:600px;width:283px;height:17px;background:#f1f1f1;"></div>
<div style="left:438px;top:602px;width:243px;height:13px;background:#c1c1c1;"></div>
<svg style="left:427px;top:605px" width="4" height="7" viewBox="0 0 4 7"><path d="M4 0v7L0 3.500z" fill="#a3a3a3"/></svg>
<svg style="left:694.300px;top:605px" width="5" height="7" viewBox="0 0 5 7"><path d="M0 0v7L4.200 3.500z" fill="#404040"/></svg>
<div style="left:704px;top:600px;width:17px;height:17px;background:#dcdcdc;"></div>
<div style="left:733px;top:489.500px;width:329px;line-height:13px;color:#333;text-align:justify;letter-spacing:-0.210px;white-space:normal;" class="t">Atenção: o preenchimento das informações da nota fiscal é de responsabilidade do emitente. Confira atentamente esses valores e, caso não correspondam à realidade, altere-os nos campos correspondentes.</div>
</div>
</body>
</html>
